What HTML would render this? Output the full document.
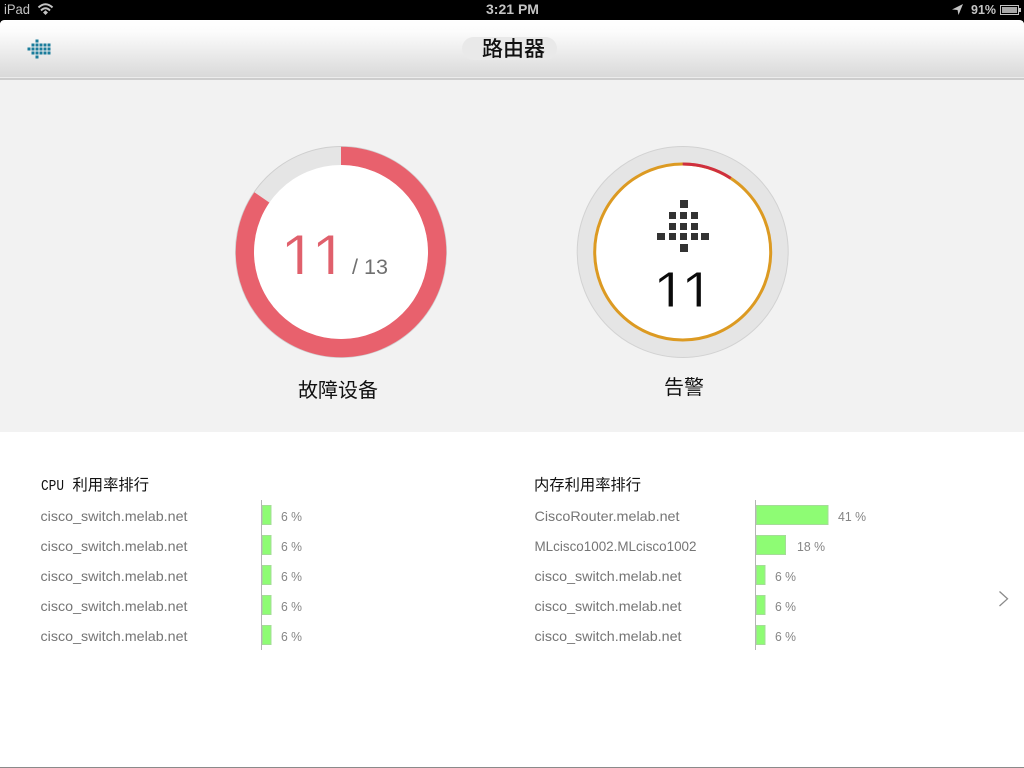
<!DOCTYPE html>
<html lang="zh"><head><meta charset="utf-8"><title>路由器</title>
<style>
html,body{margin:0;padding:0;background:#000;width:1024px;height:768px;overflow:hidden}
svg{display:block;position:absolute;left:0;top:0}
.s{font-family:"Liberation Sans",sans-serif}
.c{font-family:"Liberation Sans","Noto Sans CJK SC",sans-serif;fill:#111}
.w{font-family:"Liberation Mono","WenQuanYi Zen Hei",monospace;fill:#111}
.l{font-family:"Liberation Sans",sans-serif;font-size:14px;fill:#757575}
.p{font-family:"Liberation Sans",sans-serif;font-size:13px;fill:#858585}
.b{fill:#8efc74;stroke:#a5dc98;stroke-width:1}
</style></head><body>
<svg width="1024" height="768" viewBox="0 0 1024 768" xmlns="http://www.w3.org/2000/svg">
<defs>
<linearGradient id="h" x1="0" y1="0" x2="0" y2="1"><stop offset="0" stop-color="#fff"/><stop offset=".2" stop-color="#fcfcfc"/><stop offset="1" stop-color="#d9d9d9"/></linearGradient>
<clipPath id="c1"><rect x="280" y="225" width="70" height="49"/></clipPath>
<clipPath id="c2"><rect x="645" y="260" width="70" height="46.500"/></clipPath>
</defs>
<rect width="1024" height="768" fill="#000"/>
<!-- status bar -->
<text x="4" y="14" class="s" font-size="14" fill="#c4c4c4" textLength="26" lengthAdjust="spacingAndGlyphs">iPad</text>
<g fill="none" stroke="#c4c4c4" stroke-width="2">
<path d="M38.5 7.5Q45.500 1 52.500 7.500"/><path d="M41 10.500Q45.500 6 50 10.500"/></g>
<path d="M43 12.500L45.500 10.300 48 12.500 45.500 15Z" fill="#c4c4c4"/>
<text x="512.500" y="14" class="s" font-size="14" font-weight="700" fill="#c4c4c4" text-anchor="middle" textLength="53" lengthAdjust="spacingAndGlyphs">3:21 PM</text>
<path d="M952 9.500L963 4 958.500 15 957.500 10Z" fill="#c4c4c4"/>
<text x="971" y="14" class="s" font-size="13" font-weight="700" fill="#c4c4c4" textLength="25" lengthAdjust="spacingAndGlyphs">91%</text>
<rect x="1000.500" y="5.500" width="18" height="9" fill="none" stroke="#c4c4c4"/>
<rect x="1002" y="7" width="15" height="6" fill="#a8a8a8"/>
<rect x="1019" y="8" width="2" height="4" fill="#c4c4c4"/>
<!-- page -->
<path d="M0 25Q0 20 5 20H1019Q1024 20 1024 25V767H0Z" fill="#fff"/>
<path d="M0 25Q0 20 5 20H1019Q1024 20 1024 25V77H0Z" fill="url(#h)"/>
<rect x="0" y="77" width="1024" height="1" fill="#ececec"/>
<rect x="0" y="78" width="1024" height="2" fill="#cdcdcd"/>
<rect x="0" y="80" width="1024" height="352" fill="#f2f2f2"/>
<rect x="0" y="767" width="1024" height="1" fill="#8a8a8a"/>
<!-- header -->
<rect x="462" y="37" width="95" height="23" rx="11.500" fill="#e9e9e9"/>
<text x="482" y="56" class="c" font-size="21" font-weight="500">路由器</text>
<g fill="#1a7c9b">
<rect x="35.500" y="39.500" width="3" height="3"/>
<rect x="31.500" y="43.500" width="3" height="3"/><rect x="35.500" y="43.500" width="3" height="3"/><rect x="39.500" y="43.500" width="3" height="3"/><rect x="43.500" y="43.500" width="3" height="3"/><rect x="47.500" y="43.500" width="3" height="3"/>
<rect x="27.500" y="47.500" width="3" height="3"/><rect x="31.500" y="47.500" width="3" height="3"/><rect x="35.500" y="47.500" width="3" height="3"/><rect x="39.500" y="47.500" width="3" height="3"/><rect x="43.500" y="47.500" width="3" height="3"/><rect x="47.500" y="47.500" width="3" height="3"/>
<rect x="31.500" y="51.500" width="3" height="3"/><rect x="35.500" y="51.500" width="3" height="3"/><rect x="39.500" y="51.500" width="3" height="3"/><rect x="43.500" y="51.500" width="3" height="3"/><rect x="47.500" y="51.500" width="3" height="3"/>
<rect x="35.500" y="55.500" width="3" height="3"/>
</g>
<!-- left gauge -->
<circle cx="341" cy="252" r="105.500" fill="#e5e5e5" stroke="#cfcfcf" stroke-width="1"/>
<path d="M341 156A96 96 0 1 1 262 197.500" fill="none" stroke="#e8616d" stroke-width="18.500"/>
<circle cx="341" cy="252" r="87" fill="#fff"/>
<g clip-path="url(#c1)"><text x="280 311" y="281" class="s" font-size="67" fill="#e0606c" stroke="#fff" stroke-width="1">11</text></g>
<text x="352" y="274" class="s" font-size="21" fill="#707070" textLength="36" lengthAdjust="spacingAndGlyphs">/ 13</text>
<text x="298" y="397" class="c" font-size="20">故障设备</text>
<!-- right gauge -->
<circle cx="682.700" cy="252" r="105.500" fill="#e5e5e5" stroke="#d2d2d2" stroke-width="1"/>
<circle cx="682.700" cy="252" r="88" fill="#fff" stroke="#dc9a22" stroke-width="3"/>
<path d="M682.700 164A88 88 0 0 1 730.700 178.200" fill="none" stroke="#cf2f3f" stroke-width="3"/>
<g fill="#333">
<rect x="680" y="200" width="8" height="8"/>
<rect x="669" y="212" width="7" height="7"/><rect x="680" y="212" width="7" height="7"/><rect x="691" y="212" width="7" height="7"/>
<rect x="669" y="223" width="7" height="7"/><rect x="680" y="223" width="7" height="7"/><rect x="691" y="223" width="7" height="7"/>
<rect x="657" y="233" width="8" height="7"/><rect x="669" y="233" width="7" height="7"/><rect x="680" y="233" width="7" height="7"/><rect x="691" y="233" width="7" height="7"/><rect x="701" y="233" width="8" height="7"/>
<rect x="680" y="244" width="8" height="8"/>
</g>
<g clip-path="url(#c2)"><text x="653 681" y="313.500" class="s" font-size="60" fill="#0a0a0a" stroke="#fff" stroke-width="1">11</text></g>
<text x="664" y="394" class="c" font-size="20">告警</text>
<!-- left list -->
<text x="41" y="490" class="w" font-size="15" textLength="23" lengthAdjust="spacingAndGlyphs">CPU</text>
<text x="72.500" y="490" class="w" font-size="15.300">利用率排行</text>
<rect x="261" y="500" width="1" height="150" fill="#b5b5b5"/>
<text x="40.500" y="521" class="l" textLength="147" lengthAdjust="spacingAndGlyphs">cisco_switch.melab.net</text>
<text x="40.500" y="551" class="l" textLength="147" lengthAdjust="spacingAndGlyphs">cisco_switch.melab.net</text>
<text x="40.500" y="581" class="l" textLength="147" lengthAdjust="spacingAndGlyphs">cisco_switch.melab.net</text>
<text x="40.500" y="611" class="l" textLength="147" lengthAdjust="spacingAndGlyphs">cisco_switch.melab.net</text>
<text x="40.500" y="641" class="l" textLength="147" lengthAdjust="spacingAndGlyphs">cisco_switch.melab.net</text>
<rect class="b" x="262.500" y="505.500" width="8.500" height="19"/>
<rect class="b" x="262.500" y="535.500" width="8.500" height="19"/>
<rect class="b" x="262.500" y="565.500" width="8.500" height="19"/>
<rect class="b" x="262.500" y="595.500" width="8.500" height="19"/>
<rect class="b" x="262.500" y="625.500" width="8.500" height="19"/>
<text x="281" y="521" class="p" textLength="21" lengthAdjust="spacingAndGlyphs">6 %</text>
<text x="281" y="551" class="p" textLength="21" lengthAdjust="spacingAndGlyphs">6 %</text>
<text x="281" y="581" class="p" textLength="21" lengthAdjust="spacingAndGlyphs">6 %</text>
<text x="281" y="611" class="p" textLength="21" lengthAdjust="spacingAndGlyphs">6 %</text>
<text x="281" y="641" class="p" textLength="21" lengthAdjust="spacingAndGlyphs">6 %</text>
<!-- right list -->
<text x="534" y="490" class="w" font-size="15.300">内存利用率排行</text>
<rect x="755" y="500" width="1" height="150" fill="#b5b5b5"/>
<text x="534.500" y="521" class="l" textLength="145" lengthAdjust="spacingAndGlyphs">CiscoRouter.melab.net</text>
<text x="534.500" y="551" class="l" textLength="162" lengthAdjust="spacingAndGlyphs">MLcisco1002.MLcisco1002</text>
<text x="534.500" y="581" class="l" textLength="147" lengthAdjust="spacingAndGlyphs">cisco_switch.melab.net</text>
<text x="534.500" y="611" class="l" textLength="147" lengthAdjust="spacingAndGlyphs">cisco_switch.melab.net</text>
<text x="534.500" y="641" class="l" textLength="147" lengthAdjust="spacingAndGlyphs">cisco_switch.melab.net</text>
<rect class="b" x="756.500" y="505.500" width="71.500" height="19"/>
<rect class="b" x="756.500" y="535.500" width="29" height="19"/>
<rect class="b" x="756.500" y="565.500" width="8.500" height="19"/>
<rect class="b" x="756.500" y="595.500" width="8.500" height="19"/>
<rect class="b" x="756.500" y="625.500" width="8.500" height="19"/>
<text x="838" y="521" class="p" textLength="28" lengthAdjust="spacingAndGlyphs">41 %</text>
<text x="797" y="551" class="p" textLength="28" lengthAdjust="spacingAndGlyphs">18 %</text>
<text x="775" y="581" class="p" textLength="21" lengthAdjust="spacingAndGlyphs">6 %</text>
<text x="775" y="611" class="p" textLength="21" lengthAdjust="spacingAndGlyphs">6 %</text>
<text x="775" y="641" class="p" textLength="21" lengthAdjust="spacingAndGlyphs">6 %</text>
<path d="M999.500 591.500L1007.500 598.800 999.500 606" fill="none" stroke="#8a8a8a" stroke-width="1.300"/>
</svg>
</body></html>
